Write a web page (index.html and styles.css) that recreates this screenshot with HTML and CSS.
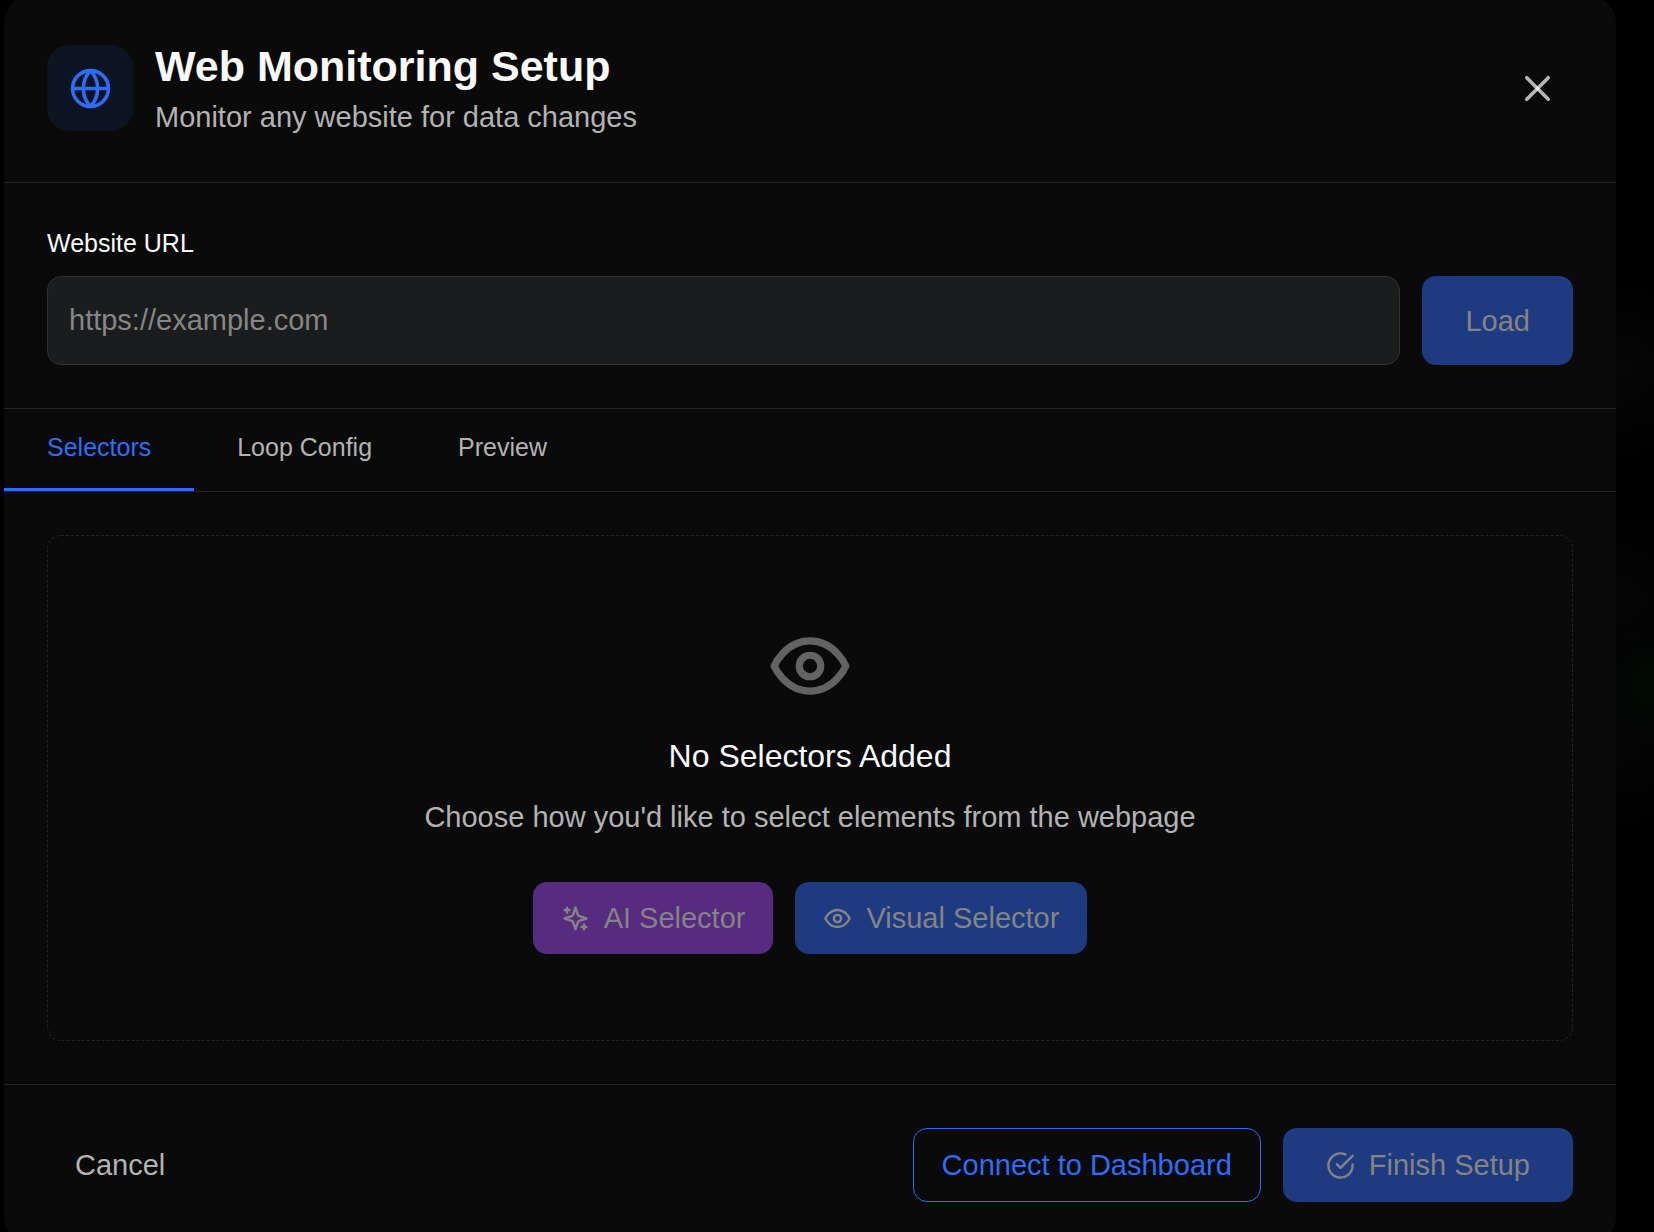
FILE: index.html
```html
<!DOCTYPE html>
<html lang="en">
<head>
<meta charset="utf-8">
<meta name="viewport" content="width=device-width, initial-scale=1">
<title>Web Monitoring Setup</title>
<link rel="stylesheet" href="styles.css">
</head>
<body>
<main class="modal" role="dialog" aria-labelledby="modal-title">
  <header class="modal-header">
    <div class="badge">
      <svg class="icon icon-lg" viewBox="0 0 24 24" aria-hidden="true"><circle cx="12" cy="12" r="10"/><path d="M12 2a14.5 14.5 0 0 0 0 20 14.5 14.5 0 0 0 0-20"/><path d="M2 12h20"/></svg>
    </div>
    <div class="heading">
      <h1 class="title" id="modal-title">Web Monitoring Setup</h1>
      <p class="subtitle">Monitor any website for data changes</p>
    </div>
    <button class="close" type="button" aria-label="Close">
      <svg class="icon icon-lg" viewBox="0 0 24 24" aria-hidden="true"><path d="M18 6 6 18"/><path d="m6 6 12 12"/></svg>
    </button>
  </header>

  <form class="url-form">
    <label class="label" for="url">Website URL</label>
    <div class="url-row">
      <input class="input" id="url" type="url" placeholder="https://example.com">
      <button class="btn btn-primary btn-wide" type="submit" disabled>Load</button>
    </div>
  </form>

  <nav class="tabs" role="tablist">
    <button class="tab tab-active" type="button" role="tab" aria-selected="true">Selectors</button>
    <button class="tab" type="button" role="tab" aria-selected="false">Loop Config</button>
    <button class="tab" type="button" role="tab" aria-selected="false">Preview</button>
  </nav>

  <section class="content">
    <div class="empty">
      <svg class="icon empty-icon" viewBox="0 0 24 24" aria-hidden="true"><path d="M2 12s3-7 10-7 10 7 10 7-3 7-10 7-10-7-10-7Z"/><circle cx="12" cy="12" r="3"/></svg>
      <h2 class="empty-title">No Selectors Added</h2>
      <p class="empty-text">Choose how you'd like to select elements from the webpage</p>
      <div class="actions">
        <button class="btn btn-ai" type="button" disabled>
          <svg class="icon icon-sm" viewBox="0 0 24 24" aria-hidden="true"><path d="m12 3-1.912 5.813a2 2 0 0 1-1.275 1.275L3 12l5.813 1.912a2 2 0 0 1 1.275 1.275L12 21l1.912-5.813a2 2 0 0 1 1.275-1.275L21 12l-5.813-1.912a2 2 0 0 1-1.275-1.275L12 3Z"/><path d="M5 3v4"/><path d="M19 17v4"/><path d="M3 5h4"/><path d="M17 19h4"/></svg>
          AI Selector
        </button>
        <button class="btn btn-primary" type="button" disabled>
          <svg class="icon icon-sm" viewBox="0 0 24 24" aria-hidden="true"><path d="M2 12s3-7 10-7 10 7 10 7-3 7-10 7-10-7-10-7Z"/><circle cx="12" cy="12" r="3"/></svg>
          Visual Selector
        </button>
      </div>
    </div>
  </section>

  <footer class="modal-footer">
    <button class="btn btn-ghost" type="button">Cancel</button>
    <div class="actions">
      <button class="btn btn-outline" type="button">Connect to Dashboard</button>
      <button class="btn btn-primary btn-wide" type="button" disabled>
        <svg class="icon icon-sm" viewBox="0 0 24 24" aria-hidden="true"><path d="M22 11.08V12a10 10 0 1 1-5.93-9.14"/><path d="m9 11 3 3L22 4"/></svg>
        Finish Setup
      </button>
    </div>
  </footer>
</main>
</body>
</html>
```
FILE: styles.css
```css
:root {
  --surface: #0a0a0a;
  --line: #232424;
  --blue: #2f6df6;
  --text: #f8f8f8;
  --muted: #b3b3b3;
}

* {
  box-sizing: border-box;
}

html {
  height: 100%;
  overflow: hidden;
}

body {
  margin: 0;
  min-height: 100%;
  padding: 0 38px 0 4px;
  overflow: hidden;
  background:
    radial-gradient(circle 60px at 100% 684px, #020a04, transparent),
    radial-gradient(circle 90px at 98% 370px, #060606, transparent),
    radial-gradient(circle 90px at 98% 600px, #050505, transparent),
    radial-gradient(circle 90px at 98% 740px, #050505, transparent),
    #000;
  color: var(--text);
  font-family: "Liberation Sans", Arial, Helvetica, sans-serif;
  font-size: 29px;
  line-height: 43px;
}

h1, h2, p {
  margin: 0;
}

button, input {
  font: inherit;
  color: inherit;
}

.modal {
  margin-top: -6px;
  border-radius: 29px;
  background: var(--surface);
}

.icon {
  display: block;
  flex: none;
  fill: none;
  stroke: currentColor;
  stroke-width: 2;
  stroke-linecap: round;
  stroke-linejoin: round;
}

.icon-lg {
  width: 43px;
  height: 43px;
}

.icon-sm {
  width: 29px;
  height: 29px;
}

.modal-header {
  display: flex;
  align-items: center;
  gap: 22px;
  padding: 43px;
  border-bottom: 1px solid var(--line);
}

.badge {
  display: grid;
  place-items: center;
  width: 86px;
  height: 86px;
  border-radius: 22px;
  background: #0d1421;
  color: var(--blue);
}

.heading {
  flex: 1;
}

.title {
  font-size: 43px;
  line-height: 59px;
  font-weight: 700;
}

.subtitle {
  color: var(--muted);
}

.close {
  padding: 14px;
  border: 0;
  background: none;
  color: rgb(255 255 255 / 70%);
}

.url-form {
  padding: 43px;
  border-bottom: 1px solid var(--line);
}

.label {
  display: block;
  margin-bottom: 16px;
  font-size: 25px;
  line-height: 34px;
}

.url-row {
  display: flex;
  gap: 22px;
}

.input {
  flex: 1;
  min-width: 0;
  padding: 22px 21px;
  border: 1px solid #303132;
  border-radius: 14px;
  background: #1b1c1d;
}

.input::placeholder {
  color: #868686;
  opacity: 1;
}

.tabs {
  display: flex;
  border-bottom: 1px solid var(--line);
}

.tab {
  padding: 21px 43px 24px;
  border: 0;
  border-bottom: 3px solid transparent;
  background: none;
  color: var(--muted);
  font-size: 25px;
  line-height: 34px;
}

.tab-active {
  border-bottom-color: var(--blue);
  color: var(--blue);
}

.content {
  padding: 43px;
}

.empty {
  display: flex;
  flex-direction: column;
  align-items: center;
  padding: 87px 43px 86px;
  border: 1px dashed var(--line);
  border-radius: 14px;
  text-align: center;
}

.empty-icon {
  width: 86px;
  height: 86px;
  margin-bottom: 22px;
  color: #636363;
}

.empty-title {
  margin-bottom: 14px;
  font-size: 32px;
  line-height: 51px;
  font-weight: 400;
}

.empty-text {
  margin-bottom: 43px;
  color: var(--muted);
}

.actions {
  display: flex;
  gap: 22px;
}

.btn {
  display: flex;
  align-items: center;
  justify-content: center;
  gap: 14px;
  padding: 14px 28px;
  border: 1px solid transparent;
  border-radius: 14px;
  background: none;
  line-height: 44px;
}

.btn:disabled {
  color: #848484;
}

.btn-primary,
.btn-ai {
  border: 0;
  background: #1e3a80;
}

.btn-ai {
  background: #562b80;
}

.btn-wide {
  padding: 14px 43px;
}

.btn-ghost {
  border: 0;
  color: var(--muted);
}

.btn-outline {
  border-color: var(--blue);
  color: var(--blue);
}

.modal-footer {
  display: flex;
  align-items: center;
  justify-content: space-between;
  padding: 43px;
  border-top: 1px solid var(--line);
}
```
